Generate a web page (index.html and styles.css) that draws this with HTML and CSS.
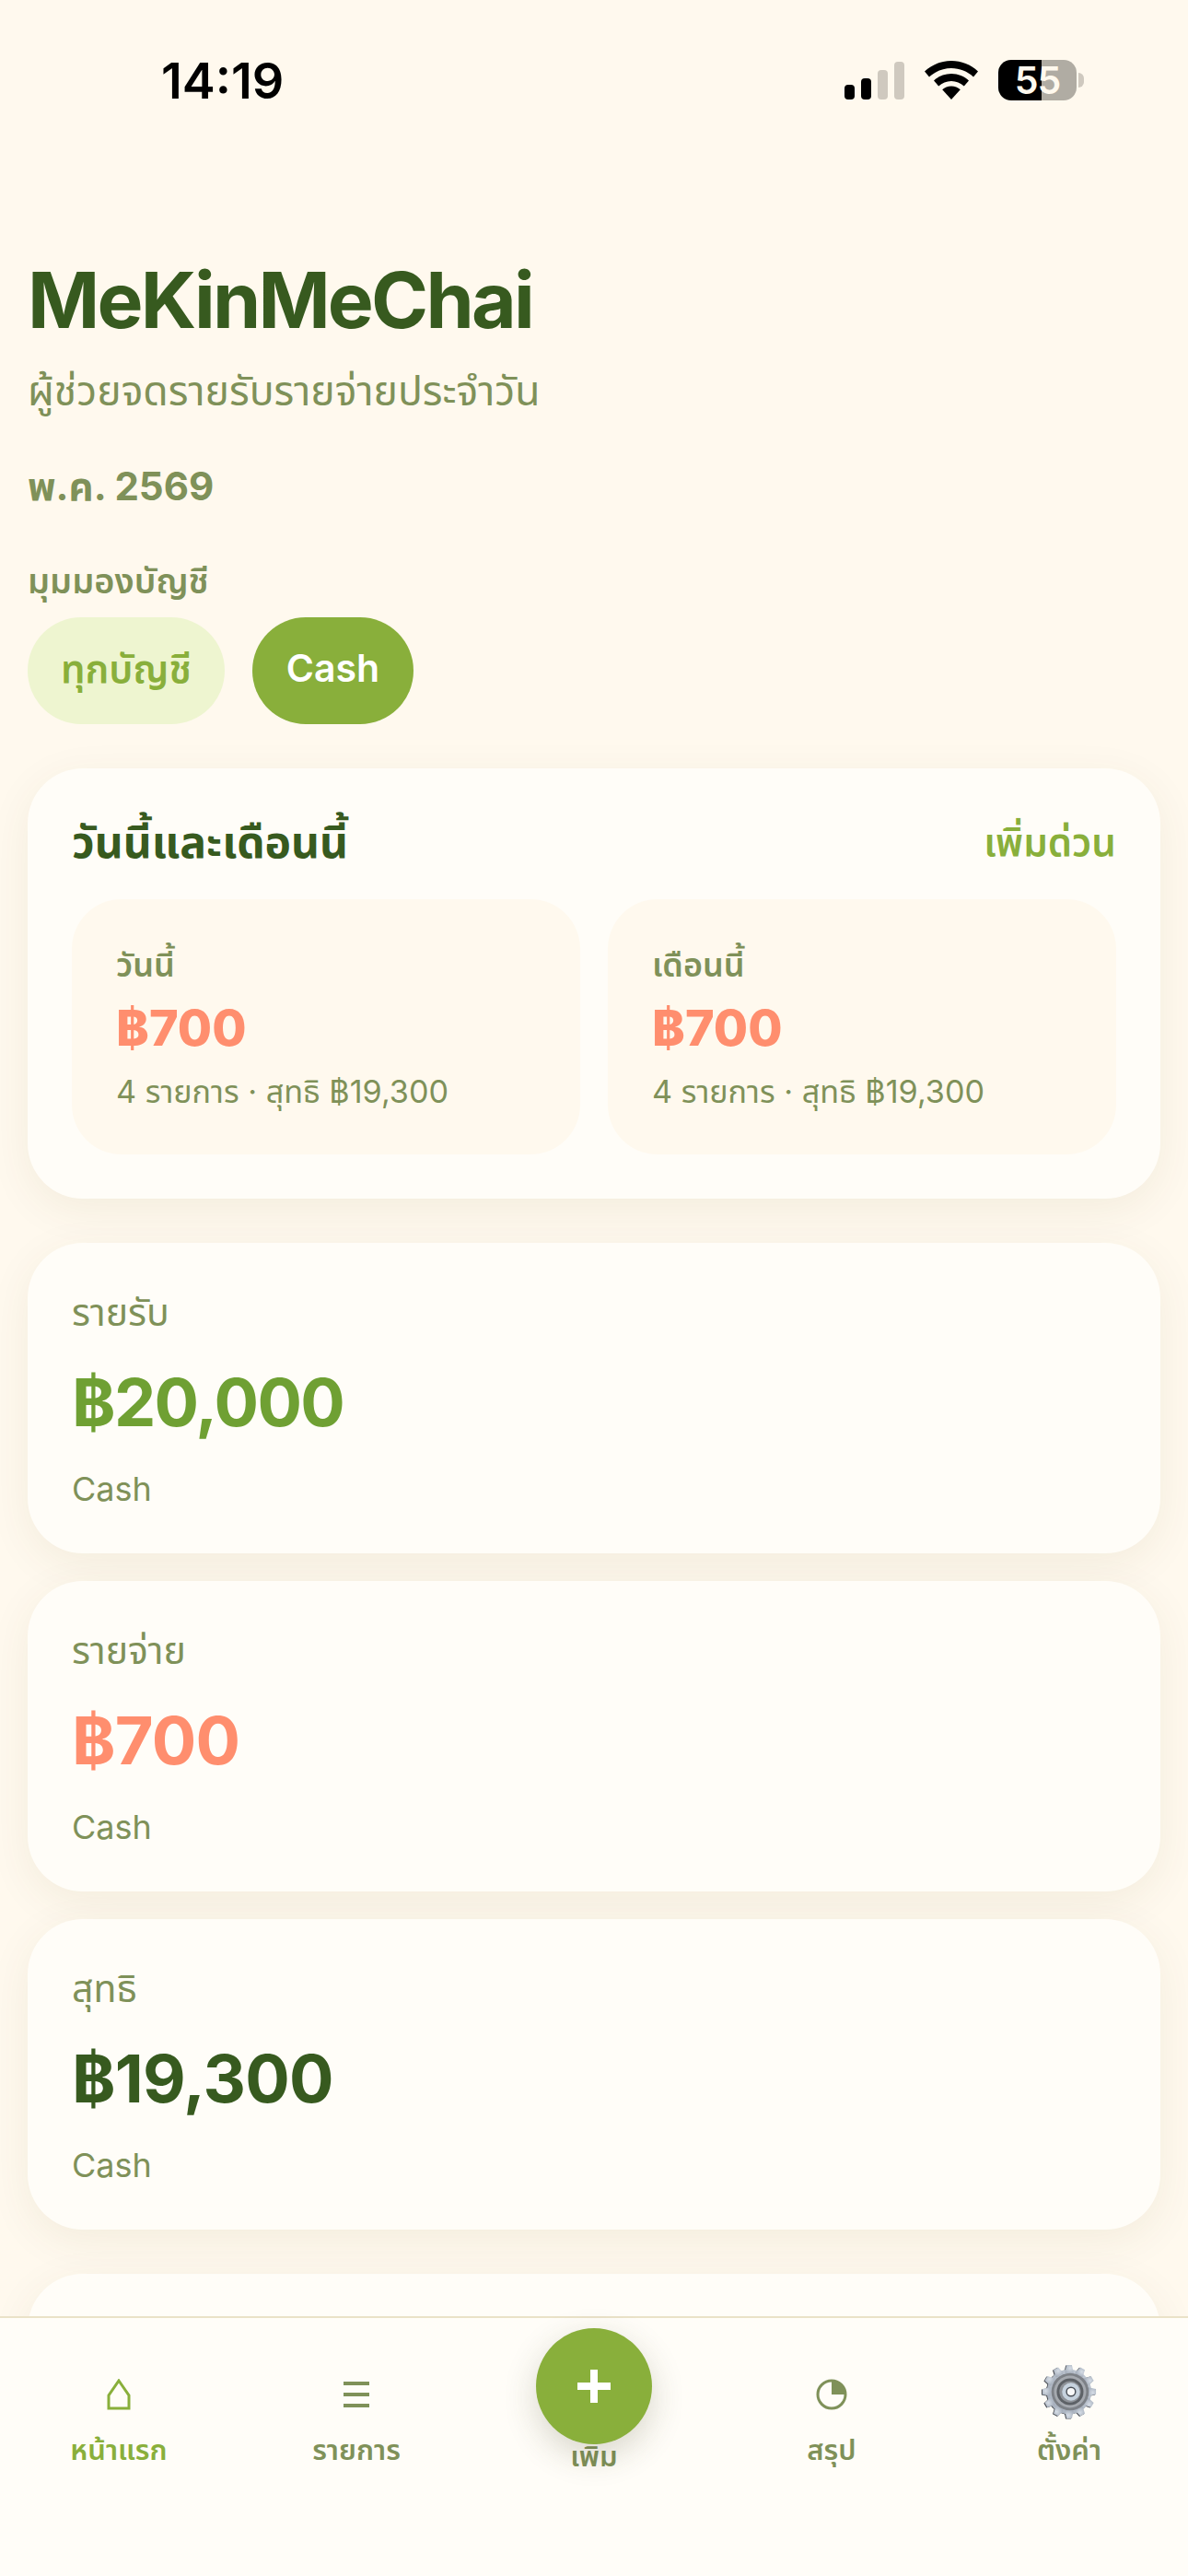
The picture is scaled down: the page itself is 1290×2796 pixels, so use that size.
FILE: index.html
```html
<!DOCTYPE html>
<html lang="th">
<head>
  <meta charset="UTF-8">
  <meta name="viewport" content="width=device-width, initial-scale=1.0">
  <link rel="stylesheet" href="styles.css">
  <title>MeKinMeChai</title>
</head>
<body>
  <div class="app">
    <div class="status-bar">
      <div class="time">14:19</div>
      <div class="status-icons">
        <div class="signal">
          <span class="bar bar-1"></span>
          <span class="bar bar-2"></span>
          <span class="bar bar-3 off"></span>
          <span class="bar bar-4 off"></span>
        </div>
        <svg class="wifi" viewBox="0 0 58 42">
          <path d="M29 0C18 0 8 4 0 11.5l5 6C11.500 11.500 20 8 29 8s17.500 3.500 24 9.500l5-6C50 4 40 0 29 0z"/>
          <path d="M29 14c-7.500 0-14 2.800-19 7.500l5.200 6C19 24.200 23.800 22 29 22s10 2.200 13.800 5.500l5.200-6C43 16.800 36.500 14 29 14z"/>
          <path d="M29 27.500c-3.800 0-7.200 1.400-9.800 3.800L29 42l9.800-10.700c-2.600-2.400-6-3.800-9.800-3.800z"/>
        </svg>
        <div class="battery">
          <div class="battery-body">55</div>
          <div class="battery-nub"></div>
        </div>
      </div>
    </div>

    <main class="content">
      <header class="header">
        <h1 class="title">MeKinMeChai</h1>
        <p class="subtitle">ผู้ช่วยจดรายรับรายจ่ายประจำวัน</p>
        <p class="month">พ.ค. 2569</p>
        <p class="chips-label">มุมมองบัญชี</p>
        <div class="chips">
          <button class="chip">ทุกบัญชี</button>
          <button class="chip active">Cash</button>
        </div>
      </header>

      <section class="card overview">
        <div class="card-head">
          <h2 class="card-title">วันนี้และเดือนนี้</h2>
          <span class="card-link">เพิ่มด่วน</span>
        </div>
        <div class="overview-grid">
          <div class="mini">
            <div class="mini-label">วันนี้</div>
            <div class="mini-value">฿700</div>
            <div class="mini-note">4 รายการ · สุทธิ ฿19,300</div>
          </div>
          <div class="mini">
            <div class="mini-label">เดือนนี้</div>
            <div class="mini-value">฿700</div>
            <div class="mini-note">4 รายการ · สุทธิ ฿19,300</div>
          </div>
        </div>
      </section>

      <div class="stats">
        <section class="card stat">
          <div class="stat-label">รายรับ</div>
          <div class="stat-value income">฿20,000</div>
          <div class="stat-note">Cash</div>
        </section>
        <section class="card stat">
          <div class="stat-label">รายจ่าย</div>
          <div class="stat-value expense">฿700</div>
          <div class="stat-note">Cash</div>
        </section>
        <section class="card stat">
          <div class="stat-label">สุทธิ</div>
          <div class="stat-value net">฿19,300</div>
          <div class="stat-note">Cash</div>
        </section>
      </div>

      <section class="card stat next"></section>
    </main>

    <nav class="tabbar">
      <div class="tab active">
        <svg class="tab-icon" viewBox="0 0 26 34">
          <path d="M13 2 L24 18 V32 H2 V18 Z" fill="none" stroke="currentColor" stroke-width="3"/>
        </svg>
        <span class="tab-label">หน้าแรก</span>
      </div>
      <div class="tab">
        <svg class="tab-icon" viewBox="0 0 28 34">
          <path d="M0 5H28M0 17H28M0 29H28" fill="none" stroke="currentColor" stroke-width="4"/>
        </svg>
        <span class="tab-label">รายการ</span>
      </div>
      <div class="tab add">
        <div class="fab">
          <svg class="fab-plus" viewBox="0 0 36 36">
            <path d="M14 0H22V14H36V22H22V36H14V22H0V14H14Z" fill="#fff"/>
          </svg>
        </div>
        <span class="tab-label">เพิ่ม</span>
      </div>
      <div class="tab">
        <svg class="tab-icon" viewBox="0 0 34 34">
          <circle cx="17" cy="17" r="15" fill="none" stroke="currentColor" stroke-width="3"/>
          <path d="M17 17V2A15 15 0 0 1 32 17Z" fill="currentColor"/>
        </svg>
        <span class="tab-label">สรุป</span>
      </div>
      <div class="tab">
        <svg class="gear" viewBox="0 0 64 64">
          <defs>
            <radialGradient id="gearBody" cx="60%" cy="40%" r="70%">
              <stop offset="0" stop-color="#d6dde6"/>
              <stop offset="1" stop-color="#a4adba"/>
            </radialGradient>
            <g id="gearShape">
              <circle cx="32" cy="32" r="25"/>
              <path id="tooth" d="M27 11 L29 2 H35 L37 11 Z"/>
              <use href="#tooth" transform="rotate(30 32 32)"/>
              <use href="#tooth" transform="rotate(60 32 32)"/>
              <use href="#tooth" transform="rotate(90 32 32)"/>
              <use href="#tooth" transform="rotate(120 32 32)"/>
              <use href="#tooth" transform="rotate(150 32 32)"/>
              <use href="#tooth" transform="rotate(180 32 32)"/>
              <use href="#tooth" transform="rotate(210 32 32)"/>
              <use href="#tooth" transform="rotate(240 32 32)"/>
              <use href="#tooth" transform="rotate(270 32 32)"/>
              <use href="#tooth" transform="rotate(300 32 32)"/>
              <use href="#tooth" transform="rotate(330 32 32)"/>
            </g>
          </defs>
          <use href="#gearShape" fill="#474b52" transform="translate(-1 0.5)"/>
          <use href="#gearShape" fill="url(#gearBody)"/>
          <circle cx="33" cy="32" r="21" fill="#7d8187"/>
          <circle cx="33" cy="32" r="18" fill="#a5a9af"/>
          <circle cx="33" cy="32" r="15" fill="#5d6166"/>
          <circle cx="33" cy="32" r="12" fill="#8e9298"/>
          <circle cx="34" cy="32" r="10" fill="#c6d2de"/>
          <circle cx="34" cy="32" r="5" fill="#f7f8f9" stroke="#4b5058" stroke-width="1.500"/>
        </svg>
        <span class="tab-label">ตั้งค่า</span>
      </div>
    </nav>
  </div>
</body>
</html>
```

FILE: styles.css
```css
* {
  box-sizing: border-box;
}

body {
  margin: 0;
  background-color: #fff9ee;
  font-family: 'Inter', 'Noto Sans', 'Noto Sans Thai', 'DejaVu Sans', sans-serif;
  color: #7f9159;
}

p, h1, h2 {
  margin: 0;
}

.app {
  position: relative;
  width: 1290px;
  height: 2796px;
  overflow: hidden;
}

/* status bar */
.status-bar {
  display: flex;
  justify-content: space-between;
  align-items: center;
  height: 174px;
  padding: 0 113px 0 175px;
}

.time {
  font-size: 54px;
  font-weight: 600;
  color: #000;
}

.status-icons {
  display: flex;
  align-items: center;
  gap: 22px;
}

.signal {
  display: flex;
  align-items: flex-end;
  gap: 7px;
  height: 41px;
}

.bar {
  width: 11px;
  border-radius: 4px;
  background-color: #000;
}

.bar.off {
  background-color: #cfc9bf;
}

.bar-1 { height: 16px; }
.bar-2 { height: 23px; }
.bar-3 { height: 32px; }
.bar-4 { height: 41px; }

.wifi {
  width: 58px;
  height: 42px;
}

.battery {
  display: flex;
  align-items: center;
  gap: 2px;
}

.battery-body {
  width: 85px;
  height: 44px;
  border-radius: 14px;
  background: linear-gradient(to right, #000 55%, #b0aca3 55%);
  color: #fff9ee;
  font-size: 41px;
  font-weight: 600;
  letter-spacing: -1px;
  line-height: 44px;
  text-align: center;
}

.battery-nub {
  width: 6px;
  height: 16px;
  border-radius: 0 6px 6px 0;
  background-color: #cfc9bf;
}

/* page */
.content {
  padding: 0 30px;
}

.header {
  padding-top: 96px;
}

.title {
  font-size: 84px;
  font-weight: 700;
  letter-spacing: -2.8px;
  line-height: 112px;
  color: #375a1f;
}

.subtitle {
  margin-top: 12px;
  font-size: 44.5px;
  line-height: 60px;
}

.month {
  margin-top: 44px;
  font-size: 42px;
  font-weight: 700;
  line-height: 60px;
}

.chips-label {
  margin-top: 42px;
  font-size: 38px;
  font-weight: 600;
  line-height: 60px;
}

.chips {
  display: flex;
  gap: 30px;
  margin-top: 10px;
}

.chip {
  height: 116px;
  padding: 0 36px;
  border: 0;
  border-radius: 58px;
  background-color: #eef5d0;
  color: #89af3b;
  font-family: inherit;
  font-size: 42px;
  font-weight: 600;
}

.chip.active {
  padding: 0 37px 6px;
  background-color: #89af3b;
  color: #fff;
  font-size: 41px;
  font-weight: 600;
}

.card {
  border-radius: 60px;
  background-color: #fffdf8;
  box-shadow: 0 12px 48px rgba(90, 70, 20, 0.07);
}

.overview {
  margin-top: 48px;
  padding: 48px;
}

.card-head {
  display: flex;
  justify-content: space-between;
  align-items: center;
  height: 62px;
  padding-top: 6px;
}

.card-title {
  font-size: 48px;
  font-weight: 700;
  color: #375a1f;
}

.card-link {
  font-size: 42px;
  font-weight: 600;
  color: #89af3b;
}

.overview-grid {
  display: grid;
  grid-template-columns: 1fr 1fr;
  gap: 30px;
  margin-top: 32px;
}

.mini {
  height: 277px;
  padding: 42px 48px;
  border-radius: 54px;
  background-color: #fff9ee;
}

.mini-label {
  font-size: 36px;
  font-weight: 600;
  line-height: 54px;
  position: relative;
  top: 2px;
}

.mini-value {
  margin-top: 10px;
  font-size: 54px;
  font-weight: 800;
  line-height: 68px;
  color: #ff8e6e;
}

.mini-note {
  margin-top: 11px;
  font-size: 34.2px;
  line-height: 48px;
}

.stats {
  display: flex;
  flex-direction: column;
  gap: 30px;
  margin-top: 48px;
}

.stat {
  height: 337px;
  padding: 48px;
}

.stat-label {
  font-size: 41px;
  line-height: 54px;
}

.stat-value {
  margin-top: 27px;
  font-size: 72px;
  font-weight: 700;
  letter-spacing: -0.8px;
  line-height: 88px;
}

.stat-note {
  margin-top: 26px;
  font-size: 36px;
  line-height: 48px;
}

.income {
  color: #6fa033;
  letter-spacing: -1.7px;
}

.expense { color: #ff8e6e; }
.net { color: #375a1f; }

.next {
  margin-top: 48px;
}

/* bottom tabs */
.tabbar {
  position: absolute;
  left: 0;
  right: 0;
  bottom: 0;
  display: grid;
  grid-template-columns: repeat(5, 1fr);
  height: 282px;
  border-top: 2px solid #eae2c8;
  background-color: #fffdf8;
}

.tab {
  position: relative;
  display: flex;
  flex-direction: column;
  align-items: center;
  justify-content: flex-end;
  height: 165px;
}

.tab.active {
  color: #89af3b;
}

.tab-icon {
  width: 34px;
  height: 34px;
  margin-bottom: 21px;
}

.tab-label {
  font-size: 31px;
  font-weight: 600;
  line-height: 44px;
}

.tab.add .tab-label {
  position: relative;
  top: 7px;
}

.fab {
  position: absolute;
  top: 11px;
  left: 50%;
  display: flex;
  align-items: center;
  justify-content: center;
  width: 126px;
  height: 126px;
  margin-left: -63px;
  border-radius: 50%;
  background-color: #89af3b;
  box-shadow: 0 12px 36px rgba(60, 60, 30, 0.2);
  z-index: 1;
}

.fab-plus {
  width: 36px;
  height: 36px;
}

.gear {
  width: 62px;
  height: 62px;
  margin-bottom: 10px;
}
```
